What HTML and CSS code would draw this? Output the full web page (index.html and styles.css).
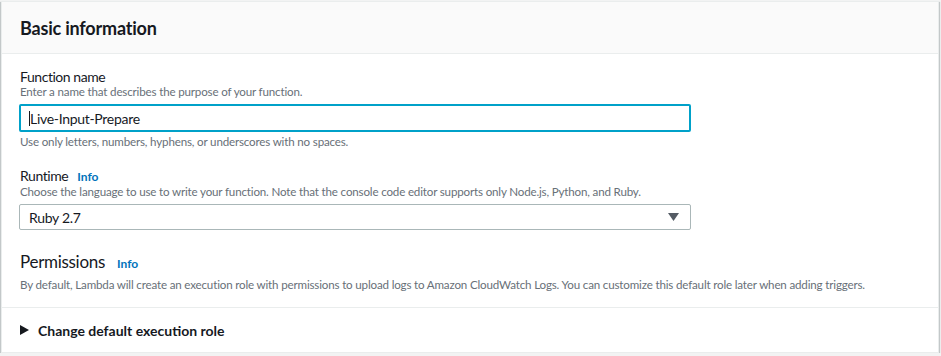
FILE: index.html
```html
<!DOCTYPE html>
<html>
<head>
<meta charset="utf-8">
<link rel="stylesheet" href="styles.css">
</head>
<body>
<div class="card">
  <div class="card-header"><h2 class="title">Basic information</h2></div>
  <div class="card-body">
    <div class="field">
      <div class="label">Function name</div>
      <div class="desc">Enter a name that describes the purpose of your function.</div>
      <div class="input focused"><span class="caret"></span>Live-Input-Prepare</div>
      <div class="constraint">Use only letters, numbers, hyphens, or underscores with no spaces.</div>
    </div>
    <div class="field runtime">
      <div class="label">Runtime <span class="info">Info</span></div>
      <div class="desc">Choose the language to use to write your function. Note that the console code editor supports only Node.js, Python, and Ruby.</div>
      <div class="input select"><span>Ruby 2.7</span><svg class="arrow" width="11" height="8" viewBox="0 0 11 8"><path d="M0 0H11L5.5 8Z" fill="#545b64"/></svg></div>
    </div>
    <div class="perm">
      <div class="perm-title">Permissions <span class="info">Info</span></div>
      <div class="desc">By default, Lambda will create an execution role with permissions to upload logs to Amazon CloudWatch Logs. You can customize this default role later when adding triggers.</div>
    </div>
  </div>
  <div class="expander">
    <svg class="tri" width="9" height="10" viewBox="0 0 9 10"><path d="M0 0L9 5L0 10Z" fill="#16191f"/></svg>
    <span>Change default execution role</span>
  </div>
</div>
</body>
</html>
```
FILE: styles.css
```css
html, body { margin: 0; padding: 0; background: #f2f3f3; }
body { font-family: "Lato", "Open Sans", sans-serif; color: #16191f; }
.card {
  margin: 1px 2px 0 1px;
  background: #fff;
  border: 1px solid #eaeded;
  box-shadow: 0 1px 1px 0 rgba(0,28,36,0.3), 1px 1px 1px 0 rgba(0,28,36,0.15), -1px 1px 1px 0 rgba(0,28,36,0.15);
}
.card-header {
  background: #fafafa;
  border-bottom: 1px solid #eaeded;
  height: 52px;
  box-sizing: border-box;
  padding: 0 18px;
  display: flex;
  align-items: center;
}
.title { margin: 0; font-size: 18px; font-weight: 700; letter-spacing: -0.2px; }
.card-body { padding: 15px 19px 0 17px; }
.label { font-size: 14px; line-height: 16px; padding-left: 1px; letter-spacing: -0.45px; }
.desc { font-size: 11.6px; line-height: 14px; color: #687078; padding-left: 1px; letter-spacing: -0.17px; }
.info { color: #0073bb; font-size: 12px; font-weight: 700; margin-left: 6px; letter-spacing: 0; }
.input {
  margin-top: 5px;
  width: 672px;
  height: 28px;
  box-sizing: border-box;
  border: 1px solid #aab7b8;
  border-radius: 2px;
  font-size: 14px;
  letter-spacing: -0.3px;
  display: flex;
  align-items: center;
  padding: 0 9px;
}
.input.focused { border: 2px solid #00a1c9; padding-left: 8px; }
.caret { display: inline-block; width: 1px; height: 15px; background: #16191f; }
.constraint { font-size: 11.6px; line-height: 16px; color: #687078; margin-top: 2px; padding-left: 1px; letter-spacing: -0.17px; }
.runtime { margin-top: 18px; }
.select { justify-content: space-between; height: 26px; padding-right: 11px; margin-top: 5px; }
.perm { padding-top: 20px; padding-bottom: 15px; }
.perm-title { font-size: 17px; line-height: 24px; padding-left: 1px; letter-spacing: -0.3px; }
.perm-title .info { margin-left: 8px; }
.perm .desc { margin-top: 2px; }
.expander {
  border-top: 1px solid #eaeded;
  height: 44px;
  display: flex;
  align-items: center;
  padding-left: 18px;
  font-size: 14px;
  font-weight: 700;
  gap: 9px;
}
```
